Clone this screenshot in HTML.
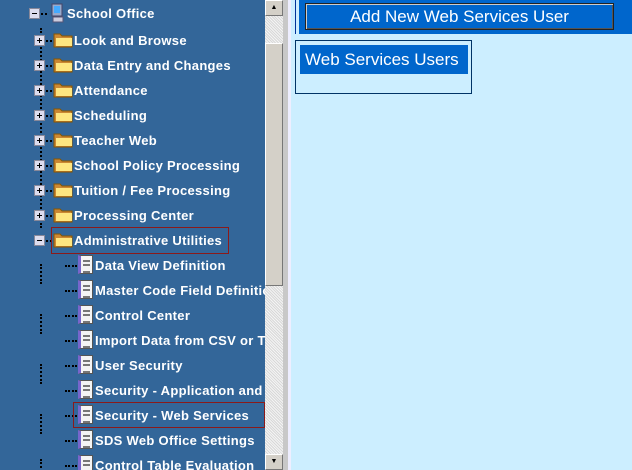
<!DOCTYPE html>
<html><head><style>
*{margin:0;padding:0;box-sizing:border-box}
body{width:632px;height:470px;overflow:hidden;background:#cceeff;position:relative;font-family:"Liberation Sans",sans-serif}
#left{position:absolute;left:0;top:0;width:265px;height:470px;background:#336699;overflow:hidden}
.row{position:absolute;color:#fff;font-weight:bold;font-size:13px;letter-spacing:0.3px;white-space:nowrap;line-height:16px;font-family:"Liberation Sans",sans-serif}
.pm{position:absolute;width:11px;height:11px;background:#dde;border:1px solid #889;}
.pm::before{content:"";position:absolute;left:2px;top:4px;width:5px;height:1px;background:#000}
.pm.p::after{content:"";position:absolute;left:4px;top:2px;width:1px;height:5px;background:#000}
.fold{position:absolute}
.vd{position:absolute;width:0;border-left:2px dotted #000}
.hd{position:absolute;height:0;border-top:2px dotted #000}
.doc{position:absolute;width:15px;height:19px;background:#f4f4f4;border:1px solid #555;border-left:3px solid #7766cc}
.doc::before{content:"";position:absolute;left:2px;top:4px;width:7px;height:9px;border-top:2px solid #777;border-bottom:2px solid #777}
.doc::after{content:"";position:absolute;left:2px;top:8px;width:7px;height:0;border-top:2px solid #777}
.sel{position:absolute;border:1px solid #8b1a1a}
#sb{position:absolute;left:265px;top:0;width:18px;height:470px;background:#e4e4e4;background-image:repeating-linear-gradient(45deg,#f4f4f4 0 1px,#d8d8d8 1px 2px)}
.btn{position:absolute;left:0;width:18px;height:16px;background:#d4d0c8;border:1px solid #fff;border-right-color:#777;border-bottom-color:#777;font-size:7px;text-align:center;line-height:14px}
.big{font-family:"Liberation Sans",sans-serif;font-size:17px;white-space:nowrap;color:#fff}
</style></head><body>
<div id="left">
<div class="vd" style="left:40px;top:28px;height:200px"></div>
<div class="vd" style="left:40px;top:264px;height:20px"></div>
<div class="vd" style="left:40px;top:314px;height:20px"></div>
<div class="vd" style="left:40px;top:364px;height:20px"></div>
<div class="vd" style="left:40px;top:414px;height:20px"></div>
<div class="vd" style="left:40px;top:459px;height:20px"></div>
<div class="pm" style="left:29px;top:8px"></div><div class="hd" style="left:41px;top:13px;width:6px"></div>
<svg style="position:absolute;left:50px;top:3px" width="16" height="20"><rect x="2" y="1" width="10" height="12" fill="#9ac" stroke="#446"/><rect x="4" y="3" width="6" height="7" fill="#4af"/><rect x="3" y="14" width="10" height="5" fill="#ccd" stroke="#557"/></svg>
<div class="row" style="left:67px;top:6px">School Office</div>
<div id="tree"></div>
<div class="sel" style="left:51px;top:227px;width:178px;height:27px"></div>
<div class="sel" style="left:73px;top:402px;width:192px;height:26px"></div>
</div>
<div id="sb">
<div class="btn" style="top:0">▲</div>
<div style="position:absolute;left:0;top:43px;width:18px;height:243px;background:#d4d0c8;border:1px solid #fff;border-right-color:#777;border-bottom-color:#777"></div>
<div class="btn" style="top:454px">▼</div>
</div>
<div style="position:absolute;left:283px;top:0;width:5px;height:470px;background:#c8c8c8"></div>
<div style="position:absolute;left:288px;top:0;width:3px;height:470px;background:#eef"></div>
<div style="position:absolute;left:295px;top:0;width:337px;height:34px;background:#0066cc;border-left:1px solid #003399"></div>
<div style="position:absolute;left:296px;top:0;width:3px;height:34px;background:#cceeff"></div>
<div class="big" style="position:absolute;left:305px;top:3px;width:309px;height:27px;background:#0066cc;border:1px solid #222;box-shadow:inset 1px 1px 0 #ccc,inset -1px -1px 0 #555;text-align:center;line-height:26px">Add New Web Services User</div>
<div style="position:absolute;left:295px;top:40px;width:177px;height:54px;border:1px solid #003366"></div>
<div class="big" style="position:absolute;left:300px;top:45px;width:168px;height:29px;background:#0066cc;line-height:29px;padding-left:5px">Web Services Users</div>
<script>
var t=document.getElementById('tree'),h='';
var f=['Look and Browse','Data Entry and Changes','Attendance','Scheduling','Teacher Web','School Policy Processing','Tuition / Fee Processing','Processing Center','Administrative Utilities'];
f.forEach(function(s,i){var y=40+25*i;
h+='<div class="pm'+(i<8?' p':'')+'" style="left:34px;top:'+(y-5)+'px"></div><div class="hd" style="left:46px;top:'+y+'px;width:6px"></div>';
h+='<svg class="fold" style="left:53px;top:'+(y-9)+'px" width="21" height="17"><path d="M1 3h6l2 2h10v11H1z" fill="#cc8833" stroke="#885500"/><path d="M3 7h16v8H3z" fill="#ffe680"/></svg>';
h+='<div class="row" style="left:74px;top:'+(y-7)+'px">'+s+'</div>';});
var d=['Data View Definition','Master Code Field Definitions','Control Center','Import Data from CSV or Text','User Security','Security - Application and','Security - Web Services','SDS Web Office Settings','Control Table Evaluation'];
d.forEach(function(s,i){var y=265+25*i;
h+='<div class="hd" style="left:65px;top:'+y+'px;width:12px"></div>';
h+='<div class="doc" style="left:78px;top:'+(y-10)+'px"></div>';
h+='<div class="row" style="left:95px;top:'+(y-7)+'px">'+s+'</div>';});
t.innerHTML=h;
</script>
</body></html>
